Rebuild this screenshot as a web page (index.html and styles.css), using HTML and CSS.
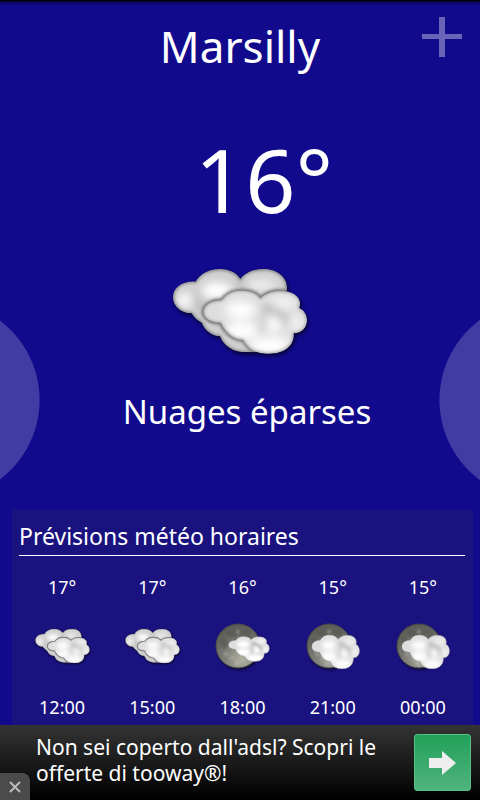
FILE: index.html
```html
<!DOCTYPE html>
<html lang="fr">
<head>
    <meta charset="UTF-8">
    <meta name="viewport" content="width=device-width, initial-scale=1.0">
    <title>Marsilly</title>
    <link rel="stylesheet" href="styles.css">
</head>
<body>
    <svg class="sprites" aria-hidden="true">
        <defs>
            <filter id="soft" x="-50%" y="-50%" width="200%" height="200%"><feGaussianBlur stdDeviation="14"/></filter>
            <filter id="edge" x="-20%" y="-20%" width="140%" height="140%"><feGaussianBlur stdDeviation="4"/></filter>
            <filter id="shadow" x="-20%" y="-20%" width="140%" height="150%"><feGaussianBlur stdDeviation="7"/></filter>
            <filter id="mottle" x="-20%" y="-20%" width="140%" height="140%"><feGaussianBlur stdDeviation="1"/></filter>
            <path id="back-shape" d="M137 95C150 70 180 57 210 57C238 57 262 70 271 87C285 68 310 57 340 57C380 57 412 80 411 115L400 200L330 307H290C250 307 222 290 210 259C185 257 165 242 155 218C140 210 132 202 125 190C92 190 69 168 69 142C69 112 98 92 137 95Z"/>
            <path id="front-shape" d="M215 150C228 130 250 121 275 121C300 121 322 130 331 144C345 130 365 122 390 122C425 122 450 138 450 160C450 166 449 170 448 174C462 180 471 195 471 210C471 232 455 250 431 250C434 285 405 311 355 311C320 311 293 298 280 271C252 270 225 250 212 219C180 218 160 205 160 186C160 163 185 150 215 150Z"/>
            <clipPath id="back-clip"><use href="#back-shape"/></clipPath>
            <clipPath id="front-clip"><use href="#front-shape"/></clipPath>
            <radialGradient id="moon-fill" cx=".6" cy=".8" r=".8">
                <stop offset="0" stop-color="#b0b0a2"/>
                <stop offset=".5" stop-color="#80807a"/>
                <stop offset="1" stop-color="#5a5a55"/>
            </radialGradient>
        </defs>
        <symbol id="cloud-front" viewBox="150 111 331 210">
            <g clip-path="url(#front-clip)">
                <use href="#front-shape" fill="#dedede"/>
                <g filter="url(#soft)">
                    <ellipse cx="272" cy="180" rx="46" ry="26" fill="#fff"/>
                    <ellipse cx="275" cy="242" rx="50" ry="26" fill="#fff"/>
                    <ellipse cx="360" cy="286" rx="60" ry="26" fill="#fff"/>
                    <ellipse cx="372" cy="222" rx="22" ry="24" fill="#fff"/>
                    <ellipse cx="440" cy="220" rx="16" ry="22" fill="#f8f8f8"/>
                    <ellipse cx="400" cy="160" rx="34" ry="14" fill="#f8f8f8"/>
                    <path d="M335 178Q390 170 408 222" fill="none" stroke="#999" stroke-width="14"/>
                    <path d="M345 200Q352 230 325 240" fill="none" stroke="#bbb" stroke-width="12"/>
                </g>
                <use href="#front-shape" fill="none" stroke="#999" stroke-width="6" filter="url(#edge)"/>
            </g>
        </symbol>
        <symbol id="clouds" viewBox="60 45 420 285">
            <g transform="translate(4 7)" filter="url(#shadow)" fill="#000" opacity=".65">
                <use href="#back-shape"/>
                <use href="#front-shape"/>
            </g>
            <g clip-path="url(#back-clip)">
                <use href="#back-shape" fill="#cfcfcf"/>
                <g filter="url(#soft)">
                    <ellipse cx="200" cy="122" rx="46" ry="26" fill="#fff"/>
                    <ellipse cx="105" cy="150" rx="22" ry="22" fill="#fff"/>
                    <ellipse cx="335" cy="105" rx="45" ry="16" fill="#f2f2f2"/>
                    <path d="M145 125Q135 165 165 190" fill="none" stroke="#aaa" stroke-width="12"/>
                    <path d="M272 90V130" stroke="#aaa" stroke-width="12"/>
                </g>
                <use href="#front-shape" fill="none" stroke="#777" stroke-width="10" filter="url(#edge)"/>
                <use href="#back-shape" fill="none" stroke="#777" stroke-width="7" filter="url(#edge)"/>
            </g>
            <use href="#cloud-front" x="150" y="111" width="331" height="210"/>
            <path d="M280 271C252 270 225 250 212 219C180 218 160 205 160 186C160 163 185 150 215 150C228 130 250 121 275 121C300 121 322 130 331 144C345 130 365 122 390 122C399 122 407 123 414 125" fill="none" stroke="#777" stroke-width="3" opacity=".6"/>
        </symbol>
        <symbol id="moon" viewBox="0 0 54 54">
            <circle cx="27" cy="28" r="22" filter="url(#mottle)" opacity=".6"/>
            <circle cx="26" cy="26" r="22" fill="url(#moon-fill)" stroke="#4a4a45"/>
            <g filter="url(#mottle)" fill="#50504c" opacity=".5">
                <ellipse cx="20" cy="14" rx="6" ry="4"/>
                <ellipse cx="33" cy="13" rx="7" ry="4"/>
                <ellipse cx="12" cy="23" rx="4" ry="6"/>
                <ellipse cx="37" cy="21" rx="5" ry="5"/>
                <ellipse cx="24" cy="21" rx="3" ry="2"/>
            </g>
            <g fill="#c0c0b2" opacity=".4" filter="url(#mottle)">
                <circle cx="14" cy="34" r="2"/>
                <circle cx="20" cy="38" r="2"/>
                <circle cx="25" cy="43" r="3"/>
                <circle cx="26" cy="12" r="2"/>
            </g>
        </symbol>
        <symbol id="hour-clouds" viewBox="0 0 60 54">
            <use href="#clouds" x="2" y="7" width="57" height="39"/>
        </symbol>
        <symbol id="hour-moon" viewBox="0 0 60 54">
            <use href="#moon" width="54" height="54"/>
            <use href="#cloud-front" x="15" y="15" width="44" height="28"/>
        </symbol>
        <symbol id="hour-moon-cloudy" viewBox="0 0 60 54">
            <use href="#moon" width="54" height="54"/>
            <g transform="translate(7 13) scale(.155 .18) translate(-150 -111)">
                <use href="#cloud-front" x="150" y="111" width="331" height="210"/>
            </g>
        </symbol>
    </svg>

    <header class="top">
        <h1 class="city">Marsilly</h1>
        <button class="add" aria-label="Ajouter">
            <svg viewBox="0 0 40 40"><path d="M17 0h6v17h17v5H23v18h-6V22H0v-5h17z"/></svg>
        </button>
    </header>

    <main class="current">
        <p class="temp">16°</p>
        <svg class="sky"><use href="#clouds"/></svg>
        <p class="desc">Nuages éparses</p>
    </main>
    <button class="side prev" aria-label="Précédent"></button>
    <button class="side next" aria-label="Suivant"></button>

    <section class="hourly">
        <h2>Prévisions météo horaires</h2>
        <ul class="hours">
            <li><span>17°</span><svg><use href="#hour-clouds"/></svg><span>12:00</span></li>
            <li><span>17°</span><svg><use href="#hour-clouds"/></svg><span>15:00</span></li>
            <li><span>16°</span><svg><use href="#hour-moon"/></svg><span>18:00</span></li>
            <li><span>15°</span><svg><use href="#hour-moon-cloudy"/></svg><span>21:00</span></li>
            <li><span>15°</span><svg><use href="#hour-moon-cloudy"/></svg><span>00:00</span></li>
        </ul>
    </section>

    <aside class="ad">
        <p>Non sei coperto dall'adsl? Scopri le offerte di tooway®!</p>
        <a class="go" href="#" aria-label="tooway">
            <svg viewBox="0 0 27 24"><path d="M0 7h13V0l14 12-14 12v-7H0z"/></svg>
        </a>
        <button class="close" aria-label="Chiudi">
            <svg viewBox="0 0 12 12"><path d="M1 1l10 10M11 1L1 11"/></svg>
        </button>
    </aside>
</body>
</html>
```
FILE: styles.css
```css
* {
    box-sizing: border-box;
}
body {
    position: relative;
    display: flex;
    flex-direction: column;
    min-height: 100vh;
    margin: 0;
    overflow-x: hidden;
    background: linear-gradient(#000 1px, #0c0663 2px, #110a8d 6px);
    color: #fff;
    font-family: "Noto Sans", "Open Sans", sans-serif;
}
h1, h2, p, ul {
    margin: 0;
    padding: 0;
    font-weight: normal;
}
button {
    padding: 0;
    border: none;
    cursor: pointer;
}
svg {
    display: block;
}
.sprites {
    position: absolute;
    width: 0;
    height: 0;
}
.top {
    display: grid;
    grid-template-columns: 40px 1fr 40px;
    padding: 17px 18px 0;
}
.city {
    grid-column: 2;
    font-size: 44px;
    line-height: 58px;
    text-align: center;
}
.add {
    height: 40px;
    background: none;
}
.add svg {
    width: 40px;
    height: 40px;
    fill: #6a64b9;
}
.current {
    flex: 1;
    display: flex;
    flex-direction: column;
    align-items: center;
    padding-top: 44px;
}
.temp {
    padding-left: 48px;
    font-size: 88px;
    line-height: 120px;
}
.sky {
    width: 140px;
    height: 95px;
    margin-top: 26px;
}
.desc {
    padding-left: 14px;
    margin-top: 28px;
    font-size: 33px;
    line-height: 48px;
}
/* round handles, mostly off screen */
.side {
    position: absolute;
    top: calc(50% - 100px);
    width: 41px;
    height: 200px;
    overflow: hidden;
}
.prev {
    left: 0;
    background: radial-gradient(circle at -60px 50%, #423ba4 99px, transparent 100px);
}
.next {
    right: 0;
    background: radial-gradient(circle at 100px 50%, #423ba4 99px, transparent 100px);
}
.hourly {
    margin: 0 7px 0 12px;
    padding: 8px 5px 0;
    background: #19127f;
}
.hourly h2 {
    margin: 0 3px 0 2px;
    border-bottom: 1px solid #fff;
    padding-bottom: 1px;
    font-size: 23px;
    line-height: 36px;
}
.hours {
    display: grid;
    grid-template-columns: repeat(5, 1fr);
    list-style: none;
}
.hours li {
    display: flex;
    flex-direction: column;
    align-items: center;
    gap: 21px;
    padding: 19px 0 6px;
    font-size: 18px;
    line-height: 24px;
}
.hours svg {
    width: 60px;
    height: 54px;
}
.ad {
    position: relative;
    display: flex;
    align-items: center;
    justify-content: space-between;
    gap: 12px;
    min-height: 75px;
    padding: 0 9px 0 36px;
    background: linear-gradient(#343434, #000);
}
.ad p {
    padding-bottom: 5px;
    font-size: 21px;
    line-height: 26px;
}
.go {
    flex: none;
    display: flex;
    align-items: center;
    justify-content: center;
    width: 57px;
    height: 57px;
    border: 1px solid #56c283;
    border-radius: 3px;
    background: linear-gradient(#22a159, #50b37e);
}
.go svg {
    width: 27px;
    height: 24px;
    fill: #eee;
}
.close {
    position: absolute;
    left: 0;
    bottom: 0;
    display: flex;
    align-items: center;
    justify-content: center;
    width: 30px;
    height: 27px;
    border-radius: 0 8px 0 0;
    background: #4b4b4b;
}
.close svg {
    width: 12px;
    height: 12px;
    fill: none;
    stroke: #bbb;
    stroke-width: 2;
}
```
